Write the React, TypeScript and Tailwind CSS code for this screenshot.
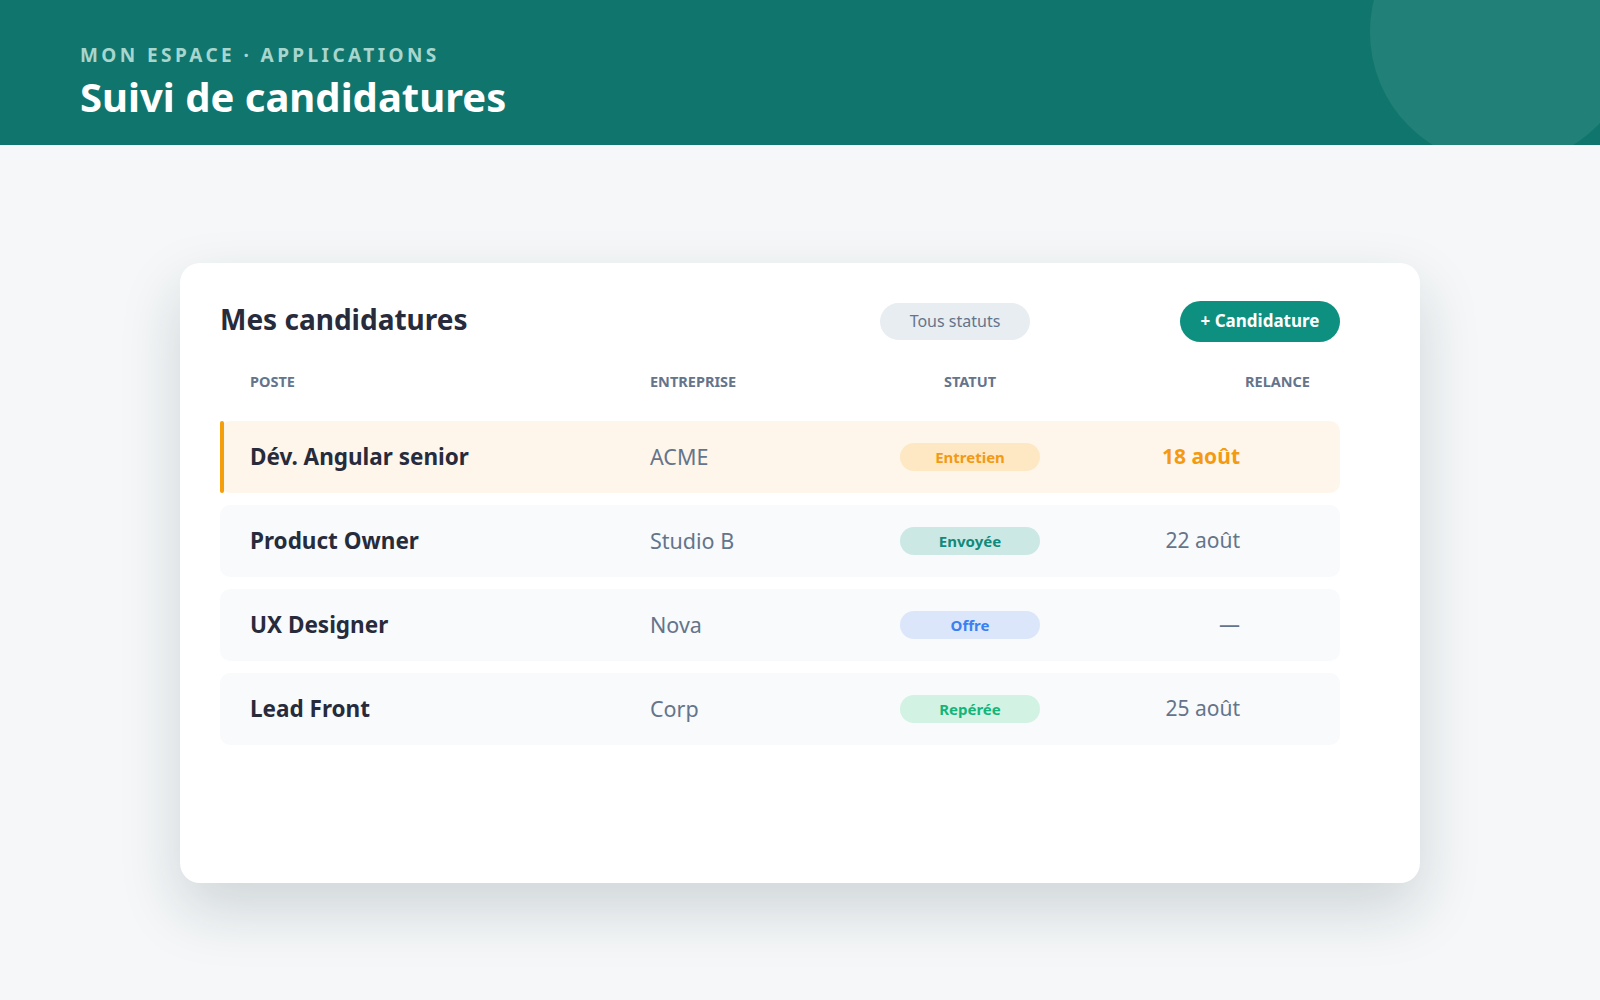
import React from "react";

type Candidature = {
  poste: string;
  entreprise: string;
  statut: "Entretien" | "Envoyée" | "Offre" | "Repérée";
  relance: string;
  urgent?: boolean;
};

const candidatures: Candidature[] = [
  { poste: "Dév. Angular senior", entreprise: "ACME", statut: "Entretien", relance: "18 août", urgent: true },
  { poste: "Product Owner", entreprise: "Studio B", statut: "Envoyée", relance: "22 août" },
  { poste: "UX Designer", entreprise: "Nova", statut: "Offre", relance: "—" },
  { poste: "Lead Front", entreprise: "Corp", statut: "Repérée", relance: "25 août" },
];

const badgeStyles: Record<Candidature["statut"], string> = {
  Entretien: "bg-[#fde8c3] text-[#f29a16]",
  Envoyée: "bg-[#cce8e4] text-[#0f8a7c]",
  Offre: "bg-[#dbe6fb] text-[#3b7ff0]",
  Repérée: "bg-[#d2f2e4] text-[#14b57a]",
};

function Row({ c }: { c: Candidature }) {
  return (
    <div
      className={`relative grid grid-cols-[400px_250px_140px_1fr] items-center h-[72px] rounded-[10px] pl-[30px] pr-[100px] ${
        c.urgent ? "bg-[#fff6eb]" : "bg-[#f8fafc]"
      }`}
    >
      {c.urgent && (
        <div className="absolute left-0 top-0 bottom-0 w-[4px] rounded-full bg-[#f59e0b]" />
      )}
      <span className="text-[22.5px] font-bold text-[#272b3b]">{c.poste}</span>
      <span className="text-[21.5px] text-[#64748b]">{c.entreprise}</span>
      <span
        className={`h-[28px] rounded-full flex items-center justify-center text-[15px] font-bold ${badgeStyles[c.statut]}`}
      >
        {c.statut}
      </span>
      <span
        className={`text-right text-[21px] ${
          c.urgent ? "font-bold text-[#f39a12]" : "text-[#64748b]"
        }`}
      >
        {c.relance}
      </span>
    </div>
  );
}

export default function App() {
  return (
    <div className="min-h-screen bg-[#f5f7f8] font-['Noto_Sans',sans-serif]">
      {/* bandeau */}
      <header className="relative h-[145px] bg-[#10766d] overflow-hidden px-[80px] pt-[42px]">
        <div className="absolute left-[1370px] top-[-101px] w-[266px] h-[266px] rounded-full bg-white/[0.07]" />
        <p className="relative text-[19px] font-bold tracking-[0.18em] text-[#a8d6cf] leading-[26px]">
          MON ESPACE · APPLICATIONS
        </p>
        <h1 className="relative text-[40px] font-bold text-white leading-[52px] mt-[3px]">
          Suivi de candidatures
        </h1>
      </header>

      <main className="flex justify-center pt-[118px]">
        <section className="w-[1240px] h-[620px] bg-white rounded-[20px] shadow-[0_26px_60px_rgba(20,50,60,0.17)] pl-[40px] pr-[80px] pt-[36px]">
          <div className="flex items-center h-[44px]">
            <h2 className="text-[28px] font-bold text-[#272b3b] -mt-[4px]">Mes candidatures</h2>
            <button className="ml-auto mr-[150px] h-[37px] w-[150px] rounded-full bg-[#e8edf1] text-[16px] text-[#64748b]">
              Tous statuts
            </button>
            <button className="h-[41px] w-[160px] rounded-full bg-[#0d9080] text-[17px] font-bold text-white">
              + Candidature
            </button>
          </div>

          <div className="grid grid-cols-[400px_250px_140px_1fr] items-center pl-[30px] pr-[30px] mt-[28px] h-[20px] text-[14.5px] font-bold text-[#64748b]">
            <span>POSTE</span>
            <span>ENTREPRISE</span>
            <span className="text-center">STATUT</span>
            <span className="text-right">RELANCE</span>
          </div>

          <div className="flex flex-col gap-[12px] mt-[30px]">
            {candidatures.map((c) => (
              <Row key={c.poste} c={c} />
            ))}
          </div>
        </section>
      </main>
    </div>
  );
}
